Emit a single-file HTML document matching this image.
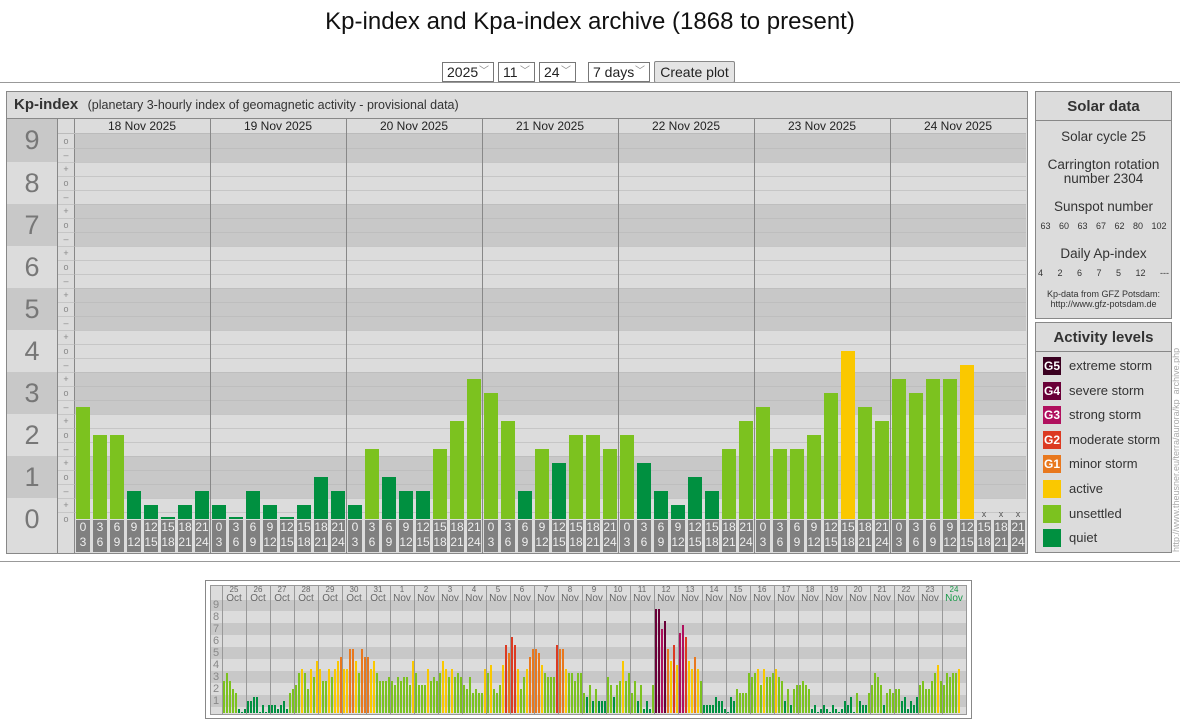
<!DOCTYPE html>
<html><head><meta charset="utf-8">
<style>
body{margin:0;width:1180px;height:720px;background:#fff;font-family:"Liberation Sans",Arial,sans-serif;position:relative;overflow:hidden;color:#222}
.a{position:absolute}
h1{position:absolute;left:0;width:1180px;top:8px;margin:0;text-align:center;font-weight:normal;font-size:24px;color:#111}
.sel{position:absolute;top:62px;border:1px solid #777;background:#fff;font-size:14px;line-height:18px;padding-left:4px;box-sizing:border-box;height:20px}
.sel span{position:absolute;right:4px;top:0;color:#888;font-size:10px}
.btn{position:absolute;top:61px;left:654px;width:81px;height:22px;border:1px solid #888;background:#e4e4e4;font-size:14px;line-height:20px;text-align:center;box-sizing:border-box;border-radius:2px}
.hr{position:absolute;left:0;width:1180px;height:1px;background:#999}
.box{position:absolute;border:1px solid #888;background:#dcdcdc;box-sizing:border-box}
.sd{text-align:center;font-size:13.5px;color:#333;line-height:14px;white-space:nowrap}
</style></head><body>
<h1>Kp-index and Kpa-index archive (1868 to present)</h1>
<div class="sel" style="left:442px;width:52px">2025<span>﹀</span></div>
<div class="sel" style="left:498px;width:37px">11<span>﹀</span></div>
<div class="sel" style="left:539px;width:37px">24<span>﹀</span></div>
<div class="sel" style="left:588px;width:62px">7 days<span>﹀</span></div>
<div class="btn">Create plot</div>
<div class="hr" style="top:82px"></div>
<div class="hr" style="top:561px"></div>

<div class="box" style="left:6px;top:91px;width:1022px;height:463px"></div>
<div id="main"></div>
<div class="a" style="left:7px;top:92px;width:1020px;height:26px;border-bottom:1px solid #888;font-size:12.5px;line-height:26px;color:#333;background:#dcdcdc"><b style="font-size:15px;margin-left:7px;margin-right:6px">Kp-index</b> (planetary 3-hourly index of geomagnetic activity - provisional data)</div>

<div class="box" style="left:1035px;top:91px;width:137px;height:228px">
 <div style="height:28px;border-bottom:1px solid #888;text-align:center;font-weight:bold;font-size:15px;line-height:29px;color:#333;white-space:nowrap">Solar data</div>
 <div class="sd">
  <div style="margin-top:9px">Solar cycle 25</div>
  <div style="margin-top:14px">Carrington rotation<br>number 2304</div>
  <div style="margin-top:14px">Sunspot number</div>
  <div style="font-size:9px;margin-top:5px;word-spacing:6px">63 60 63 67 62 80 102</div>
  <div style="margin-top:14px">Daily Ap-index</div>
  <div style="font-size:9px;margin-top:5px;word-spacing:12px">4 2 6 7 5 12 ---</div>
  <div style="font-size:9px;margin-top:9px;line-height:10px">Kp-data from GFZ Potsdam:<br>http://www.gfz-potsdam.de</div>
 </div>
</div>
<div class="box" style="left:1035px;top:322px;width:137px;height:231px">
 <div style="height:28px;border-bottom:1px solid #888;text-align:center;font-weight:bold;font-size:15px;line-height:29px;color:#333;white-space:nowrap">Activity levels</div>
 <div id="leg"></div>
</div>
<div class="a" style="left:1172px;top:552px;transform:rotate(-90deg);transform-origin:0 0;white-space:nowrap;font-size:9px;line-height:9px;color:#aaa;width:215px">http://www.theusner.eu/terra/aurora/kp_archive.php</div>

<div class="a" style="left:205px;top:580px;width:767px;height:139px;border:1px solid #888;box-sizing:border-box;background:#fff"></div>
<div class="a" style="left:210px;top:585px;width:757px;height:130px;border:1px solid #999;box-sizing:border-box;background:#dcdcdc"></div>
<div id="mini"></div>

<script>
(function(){
var C=function(t){return t<=4?'#009040':t<=10?'#7cc21f':t<=13?'#fac800':t<=16?'#e8781e':t<=19?'#dc3a22':t<=22?'#b0105e':t<=26?'#6a0038':'#3a0020';};
var h='';
for(var n=0;n<=9;n++){
 var yt=519-42*n-21,yb=519-42*n+21;
 if(n==9)yt=119; if(n==0)yb=553;
 var col=(n%2)?'#c8c8c8':'#dcdcdc';
 h+='<div class="a" style="left:7px;top:'+yt+'px;width:50px;height:'+(yb-yt)+'px;background:'+col+';text-align:center;font-size:27px;color:#777;line-height:'+(yb-yt)+'px">'+(n==0?'<span style="position:relative;top:-6px">0</span>':n)+'</div>';
 var t2=Math.max(yt,133),b2=Math.min(yb,519);
 h+='<div class="a" style="left:74px;top:'+t2+'px;width:952px;height:'+(b2-t2)+'px;background:'+col+'"></div>';
}
h+='<div class="a" style="left:74px;top:118px;width:952px;height:15px;background:#dcdcdc"></div>';
h+='<div class="a" style="left:58px;top:118px;width:16px;height:435px;background:#dcdcdc"></div>';
h+='<div class="a" style="left:74px;top:519px;width:952px;height:34px;background:#dcdcdc"></div>';
h+='<div class="a" style="left:57px;top:118px;width:1px;height:435px;background:#888"></div>';
h+='<div class="a" style="left:74px;top:118px;width:1px;height:435px;background:#888"></div>';
for(var k=0;k<27;k++){var y=519-7-14*k;h+='<div class="a" style="left:58px;top:'+y+'px;width:968px;height:1px;background:#b8b8b8;opacity:.6"></div>';}
h+='<div class="a" style="left:58px;top:133px;width:968px;height:1px;background:#bbb"></div>';
for(var t=0;t<=27;t++){var y=519-14*t;h+='<div class="a" style="left:58px;top:'+(y-7)+'px;width:16px;height:14px;text-align:center;font-size:9px;line-height:14px;color:#888">'+['o','+','–'][t%3]+'</div>';}
var dates=['18','19','20','21','22','23','24'];
var data=[[8,6,6,2,1,0,1,2],[1,0,2,1,0,1,3,2],[1,5,3,2,2,5,7,10],[9,7,2,5,4,6,6,5],[6,4,2,1,3,2,5,7],[8,5,5,6,9,12,8,7],[10,9,10,10,11,-1,-1,-1]];
var hrs=[[0,3],[3,6],[6,9],[9,12],[12,15],[15,18],[18,21],[21,24]];
for(var d=0;d<7;d++){
 var x0=74+136*d;
 h+='<div class="a" style="left:'+x0+'px;top:119px;width:136px;text-align:center;font-size:12px;color:#222">'+dates[d]+' Nov 2025</div>';
 if(d>0)h+='<div class="a" style="left:'+x0+'px;top:118px;width:1px;height:435px;background:#888"></div>';
 for(var i=0;i<8;i++){
  var x=x0+17*i,v=data[d][i];
  if(v>=0){var ht=Math.max(2,14*v);h+='<div class="a" style="left:'+(x+2)+'px;top:'+(519-ht)+'px;width:14px;height:'+ht+'px;background:'+C(v)+'"></div>';}
  else h+='<div class="a" style="left:'+(x+2)+'px;top:509px;width:14px;text-align:center;font-size:9px;color:#555">x</div>';
  h+='<div class="a" style="left:'+(x+2)+'px;top:520px;width:14px;height:32px;background:#808080;color:#eee;font-size:12px;line-height:15px;text-align:center">'+hrs[i][0]+'<br>'+hrs[i][1]+'</div>';
 }
}
document.getElementById('main').innerHTML=h;
var L=[['#3a0020','G5','extreme storm'],['#6a0038','G4','severe storm'],['#b0105e','G3','strong storm'],['#dc3a22','G2','moderate storm'],['#e8781e','G1','minor storm'],['#fac800','','active'],['#7cc21f','','unsettled'],['#009040','','quiet']];
var g='';for(var i=0;i<8;i++){var y=357+24.6*i-323;g+='<div class="a" style="left:7px;top:'+y+'px;width:18px;height:18px;background:'+L[i][0]+';color:#fff;font-weight:bold;font-size:12px;line-height:18px;text-align:center">'+L[i][1]+'</div><div class="a" style="left:33px;top:'+(y+1)+'px;font-size:13px;color:#333;white-space:nowrap">'+L[i][2]+'</div>';}
document.getElementById('leg').innerHTML=g;
var m='';
for(var n=0;n<=9;n++){var yt=713-12*n-6,yb=713-12*n+6;if(n==9)yt=600;if(n==0)yb=713;
 m+='<div class="a" style="left:211px;top:'+yt+'px;width:755px;height:'+(yb-yt)+'px;background:'+((n%2)?'#c8c8c8':'#dcdcdc')+'"></div>';
 if(n>0)m+='<div class="a" style="left:210px;top:'+(713-12*n-7)+'px;width:12px;text-align:center;font-size:11px;color:#888;line-height:14px">'+n+'</div>';}
var md=[[8,10,8,6,5,1,0,1],[3,3,4,4,0,2,0,2],[2,2,1,2,3,1,5,6],[7,10,11,10,6,11,9,13],[11,8,8,11,9,11,13,14],[11,11,16,16,13,10,16,14],[14,11,13,10,8,8,8,9],[8,7,9,8,9,9,7,13],[10,7,7,7,11,8,9,8],[10,13,11,9,11,9,10,9],[7,6,9,5,6,5,5,11],[10,12,6,5,7,12,17,15],[19,17,11,6,9,11,14,16],[16,15,12,10,9,9,9,17],[16,16,11,10,10,8,10,10],[5,4,7,3,6,3,3,3],[9,7,4,7,8,13,8,10],[5,8,3,7,1,3,1,7],[26,26,21,23,16,13,17,12],[20,22,19,13,11,14,11,8],[2,2,2,2,4,3,3,1],[0,4,3,6,5,5,5,10],[9,10,11,7,11,9,9,10],[11,9,8,3,6,2,6,7],[7,8,7,6,1,2,0,1],[2,1,0,2,1,0,1,3],[2,4,0,5,3,2,2,5],[7,10,9,7,2,5,6,5],[6,6,3,4,1,3,2,4],[7,8,6,6,8,10,12,8],[7,10,9,10,10,11,-1,-1]];
for(var d=0;d<31;d++){var x0=222+24*d;var day=d<7?(25+d):(d-6);var mo=d<7?'Oct':'Nov';var c=d==30?'#1a9a4a':'#666';
 m+='<div class="a" style="left:'+x0+'px;top:585px;width:1px;height:129px;background:#999"></div>';
 m+='<div class="a" style="left:'+x0+'px;top:586px;width:24px;text-align:center;font-size:8px;line-height:8px;color:'+c+'">'+day+'<br><span style="font-size:10px;line-height:10px">'+mo+'</span></div>';
 for(var i=0;i<8;i++){var v=md[d][i];if(v<0)continue;var ht=Math.max(1,4*v);m+='<div class="a" style="left:'+(x0+1+3*i)+'px;top:'+(713-ht)+'px;width:2px;height:'+ht+'px;background:'+C(v)+'"></div>';}}
document.getElementById('mini').innerHTML=m;
})();
</script>
</body></html>
